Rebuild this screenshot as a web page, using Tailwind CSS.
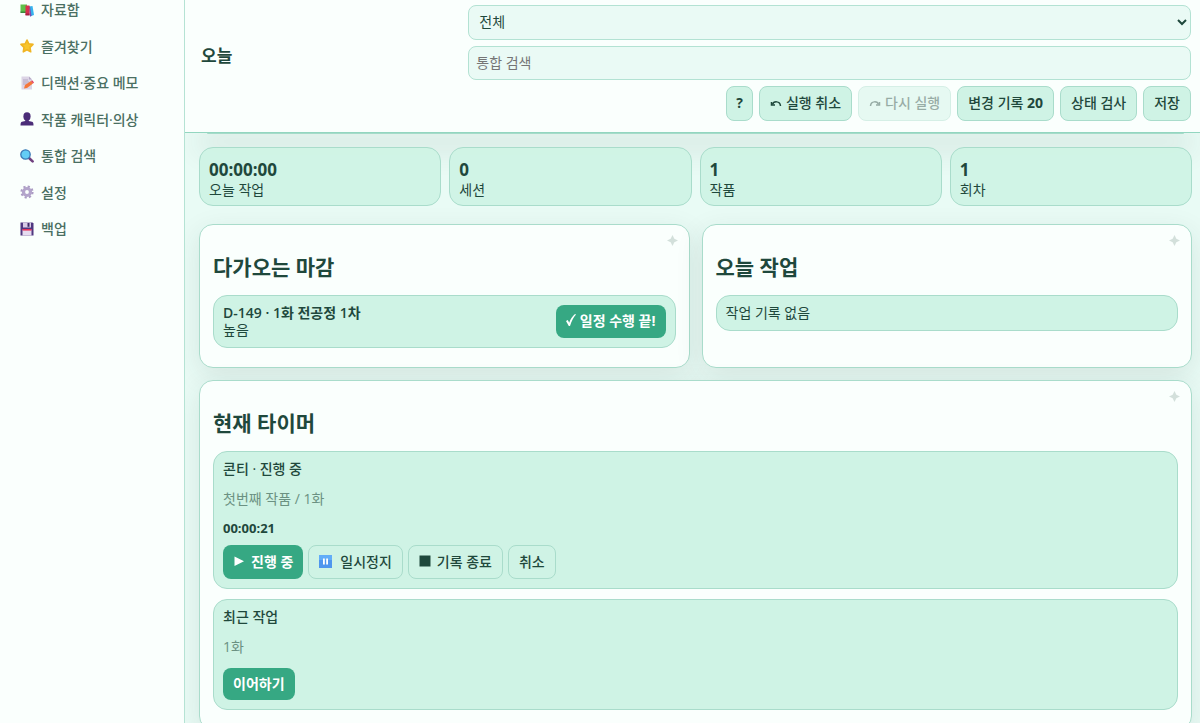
<!DOCTYPE html>
<html lang="ko">
<head>
  <meta charset="UTF-8">
  <meta name="viewport" content="width=device-width, initial-scale=1.0">
  <script src="https://cdn.jsdelivr.net/npm/@tailwindcss/browser@4"></script>
  <title>오늘</title>
</head>
<body class="flex min-h-screen bg-[#e9fbf5] font-['Open_Sans','Noto_Sans_CJK_KR',sans-serif] text-sm text-[#1f483c]">

  <!-- 사이드바 -->
  <aside class="relative z-10 w-[185px] shrink-0 border-r border-[#b5e3d4] bg-[#fafffd]">
    <nav class="-mt-[7px] flex flex-col gap-[3px] pl-5 leading-tight font-medium text-[#4a6f62]">
      <a href="#library" class="flex items-center gap-[7px] py-2">
        <svg class="size-3.5" viewBox="0 0 14 14"><path d="M.5 1.500h6.500v8H.500z" fill="#5fc04a"/><path d="M.5 8.500h6.500v1.500H.500z" fill="#3b8a3c"/><path d="M9 3.500l3.500-.5 1.500 9-4 1.500z" fill="#35b4ee"/><path d="M9 3.500l1-.2 1.500 9.700-1.500.5z" fill="#7a4bb0"/><path d="M5.500 2.500H9.500v9.500H5.500z" fill="#d8304f"/><path d="M5.500 10.500h4V12.500h-4z" fill="#a61e45"/></svg>
        자료함
      </a>
      <a href="#favorites" class="flex items-center gap-[7px] py-2">
        <svg class="size-3.5" viewBox="0 0 14 14"><path d="M7 1l1.800 3.800 4.200.6-3 3 .7 4.400L7 10.800l-3.700 2 .7-4.400-3-3 4.200-.6z" fill="#f7c52d" stroke="#f0b524" stroke-width="1.600" stroke-linejoin="round"/></svg>
        즐겨찾기
      </a>
      <a href="#memo" class="flex items-center gap-[7px] py-2">
        <svg class="size-3.5" viewBox="0 0 14 14"><path d="M1.500.500h7.500l3 3v10H1.500z" fill="#dcd5e6"/><path d="M9 .500v3h3z" fill="#b5a9c6"/><path d="M3 4h5M3 6h6M3 8h4" stroke="#a99dbb" stroke-width=".8"/><path d="M4 12.500l1-3.500 6-4 2 2.500-6 4.500z" fill="#f5773b"/><path d="M11 5l1.200-.8 1.800 2.400-1 .9z" fill="#e23d5c"/></svg>
        디렉션·중요 메모
      </a>
      <a href="#characters" class="flex items-center gap-[7px] py-2">
        <svg class="size-3.5" viewBox="0 0 14 14"><ellipse cx="7" cy="4.500" rx="3.600" ry="4.200" fill="#4b2d78"/><path d="M5.300 7h3.400v2l3.300.8c1 .3 1.500 1.200 1.500 3.600H.5c0-2.400.5-3.300 1.500-3.600l3.300-.8z" fill="#4b2d78"/></svg>
        작품 캐릭터·의상
      </a>
      <a href="#search" class="flex items-center gap-[7px] py-2">
        <svg class="size-3.5" viewBox="0 0 14 14"><path d="M9 9l3.600 3.400" stroke="#70407f" stroke-width="2.600" stroke-linecap="round"/><circle cx="5.500" cy="5.500" r="4.700" fill="#63cdf5" stroke="#3b78b5" stroke-width="1.300"/></svg>
        통합 검색
      </a>
      <a href="#settings" class="flex items-center gap-[7px] py-2">
        <svg class="size-3.5" viewBox="0 0 14 14"><circle cx="7" cy="7" r="5.500" fill="none" stroke="#ab9cc3" stroke-width="2.200" stroke-dasharray="2.160 2.160"/><circle cx="7" cy="7" r="3.500" fill="none" stroke="#b3a4cb" stroke-width="3.200"/></svg>
        설정
      </a>
      <a href="#backup" class="flex items-center gap-[7px] py-2">
        <svg class="size-3.5" viewBox="0 0 14 14"><path d="M.5.500h12l1 1v12H.500z" fill="#4f3780"/><path d="M3 .500h8v5H3z" fill="#d7cbe6"/><path d="M7.500 1h2v3.800h-2z" fill="#3c2868"/><path d="M2.500 7.500h9v6h-9z" fill="#e6dcf0"/><path d="M2.500 7h9v1.600h-9z" fill="#e8345c"/></svg>
        백업
      </a>
    </nav>
  </aside>

  <div class="min-w-0 flex-1">
    <!-- 상단 바 -->
    <header class="relative z-10 grid grid-cols-[27fr_73fr] items-center border-b border-[#93d6c0] bg-[#fafffd] pt-[5px] pr-[9px] pb-[11px] pl-4">
      <h1 class="pb-3.5 text-[17px] font-bold">오늘</h1>
      <div class="flex flex-col gap-1.5">
        <select aria-label="범위" class="h-[35px] w-full rounded-lg border border-[#b3e2d3] bg-[#eafaf5] px-1.5 pb-0.5">
          <option>전체</option>
        </select>
        <input type="search" aria-label="통합 검색" placeholder="통합 검색" class="h-[34px] w-full rounded-lg border border-[#b3e2d3] bg-[#eafaf5] px-[7px] pb-0.5 placeholder:text-[#757575]">
        <div class="flex justify-end gap-1.5 font-medium">
          <button class="h-[35px] rounded-lg border border-[#a9dccb] bg-[#cff3e5] px-[9px] pb-0.5 font-bold">?</button>
          <button class="flex h-[35px] items-center gap-1 rounded-lg border border-[#a9dccb] bg-[#cff3e5] px-2.5 pb-0.5">
            <svg class="h-3 w-3" viewBox="0 0 12 12" fill="none" stroke="currentColor" stroke-width="1.500"><path d="M2.500 7.500C3.500 4 10 3.500 10.500 9"/><path d="M1.500 5v3h3.500"/></svg>
            실행 취소
          </button>
          <button disabled class="flex h-[35px] items-center gap-1 rounded-lg border border-[#a9dccb] bg-[#cff3e5] px-2.5 pb-0.5 opacity-45">
            <svg class="h-3 w-3" viewBox="0 0 12 12" fill="none" stroke="currentColor" stroke-width="1.500"><path d="M9.500 7.500C8.500 4 2 3.500 1.500 9"/><path d="M10.500 5v3H7"/></svg>
            다시 실행
          </button>
          <button class="h-[35px] rounded-lg border border-[#a9dccb] bg-[#cff3e5] px-2.5 pb-0.5">변경 기록 <b>20</b></button>
          <button class="h-[35px] rounded-lg border border-[#a9dccb] bg-[#cff3e5] px-2.5 pb-0.5">상태 검사</button>
          <button class="h-[35px] rounded-lg border border-[#a9dccb] bg-[#cff3e5] px-2.5 pb-0.5">저장</button>
        </div>
      </div>
    </header>

    <main class="pr-2 pl-3.5 leading-[17px]">
      <div class="mx-2 h-px rounded-b-full bg-[#a5dbc9] shadow-[0_8px_28px_8px_rgba(40,60,55,0.12)]"></div>

      <!-- 요약 -->
      <section class="mt-[13px] grid grid-cols-4 gap-2">
        <div class="rounded-[14px] border border-[#a9dccb] bg-[#cff3e5]/95 px-[9px] pt-[11px] pb-[7px]">
          <strong class="block text-[17px] leading-[22px]">00:00:00</strong>
          <span class="block">오늘 작업</span>
        </div>
        <div class="rounded-[14px] border border-[#a9dccb] bg-[#cff3e5]/95 px-[9px] pt-[11px] pb-[7px]">
          <strong class="block text-[17px] leading-[22px]">0</strong>
          <span class="block">세션</span>
        </div>
        <div class="rounded-[14px] border border-[#a9dccb] bg-[#cff3e5]/95 px-[9px] pt-[11px] pb-[7px]">
          <strong class="block text-[17px] leading-[22px]">1</strong>
          <span class="block">작품</span>
        </div>
        <div class="rounded-[14px] border border-[#a9dccb] bg-[#cff3e5]/95 px-[9px] pt-[11px] pb-[7px]">
          <strong class="block text-[17px] leading-[22px]">1</strong>
          <span class="block">회차</span>
        </div>
      </section>

      <div class="mt-[18px] grid grid-cols-2 gap-3">
        <!-- 다가오는 마감 -->
        <section class="relative rounded-[14px] border border-[#a9dccb] bg-[#fafffd] px-[13px] pt-7 pb-[19px] shadow-[0_8px_28px_rgba(40,60,55,0.1)]">
          <svg class="absolute top-2.5 right-[11px] size-[11px]" viewBox="0 0 12 12" fill="#d3e0db"><path d="M6 0l2 4 4 2-4 2-2 4-2-4-4-2 4-2z"/></svg>
          <h2 class="mb-3.5 text-[21px] leading-7 font-bold">다가오는 마감</h2>
          <div class="flex items-center justify-between rounded-[14px] border border-[#a9dccb] bg-[#cff3e5] px-[9px] pt-2 pb-[9px]">
            <div>
              <strong class="block font-semibold">D-149 · 1화 전공정 1차</strong>
              <span class="block">높음</span>
            </div>
            <button class="flex h-[33px] items-center gap-1 rounded-lg bg-[#36a883] px-2.5 pb-0.5 font-bold text-white">
              <svg class="h-3 w-2.5" viewBox="0 0 10 12"><path d="M0 7l1.800-1 1.400 2.800C4.500 5 6.500 2 9 0l1 .6C7.500 3.500 5.500 7 4 12H2.800z" fill="currentColor"/></svg>
              일정 수행 끝!
            </button>
          </div>
        </section>

        <!-- 오늘 작업 -->
        <section class="relative rounded-[14px] border border-[#a9dccb] bg-[#fafffd] px-[13px] pt-7 pb-[19px] shadow-[0_8px_28px_rgba(40,60,55,0.1)]">
          <svg class="absolute top-2.5 right-[11px] size-[11px]" viewBox="0 0 12 12" fill="#d3e0db"><path d="M6 0l2 4 4 2-4 2-2 4-2-4-4-2 4-2z"/></svg>
          <h2 class="mb-3.5 text-[21px] leading-7 font-bold">오늘 작업</h2>
          <p class="rounded-[14px] border border-[#a9dccb] bg-[#cff3e5] px-[9px] pt-2 pb-[9px]">작업 기록 없음</p>
        </section>
      </div>

      <!-- 현재 타이머 -->
      <section class="relative mt-3 rounded-[14px] border border-[#a9dccb] bg-[#fafffd] px-[13px] pt-7 pb-[19px] shadow-[0_8px_28px_rgba(40,60,55,0.1)]">
        <svg class="absolute top-2.5 right-[11px] size-[11px]" viewBox="0 0 12 12" fill="#d3e0db"><path d="M6 0l2 4 4 2-4 2-2 4-2-4-4-2 4-2z"/></svg>
        <h2 class="mb-3.5 text-[21px] leading-7 font-bold">현재 타이머</h2>
        <div class="flex flex-col gap-2.5">
          <div class="rounded-[14px] border border-[#a9dccb] bg-[#cff3e5] px-[9px] pt-2 pb-[9px]">
            <strong class="block font-medium">콘티 · 진행 중</strong>
            <p class="my-[13px] text-[#6b9182]">첫번째 작품 / 1화</p>
            <strong class="block text-[13px]">00:00:21</strong>
            <div class="mt-2 flex gap-[5px] font-medium">
              <button class="flex h-[34px] items-center gap-1.5 rounded-lg bg-[#36a883] px-2.5 pb-0.5 font-bold text-white">
                <svg class="h-3 w-3" viewBox="0 0 12 12" fill="currentColor"><path d="M1.500 1.500v9.500L11 6.200z"/></svg>
                진행 중
              </button>
              <button class="flex h-[34px] items-center gap-2 rounded-lg border border-[#a9dccb] px-2.5 pb-0.5">
                <svg class="size-[13px]" viewBox="0 0 13 13"><path d="M0 0h13v13H0z" fill="#4f96ee"/><path d="M0 0h13v5H0z" fill="#62adf8"/><path d="M4 3.500h1.800v6H4zM7.200 3.500H9v6H7.200z" fill="#fff"/></svg>
                일시정지
              </button>
              <button class="flex h-[34px] items-center gap-1.5 rounded-lg border border-[#a9dccb] px-2.5 pb-0.5">
                <svg class="h-3 w-3" viewBox="0 0 12 12" fill="currentColor"><path d="M.5.500h11v11H.500z"/></svg>
                기록 종료
              </button>
              <button class="h-[34px] rounded-lg border border-[#a9dccb] px-2.5 pb-0.5">취소</button>
            </div>
          </div>
          <div class="rounded-[14px] border border-[#a9dccb] bg-[#cff3e5] px-[9px] pt-2 pb-[9px]">
            <strong class="block font-medium">최근 작업</strong>
            <p class="my-[13px] text-[#6b9182]">1화</p>
            <button class="block h-8 rounded-lg bg-[#36a883] px-2.5 pb-0.5 font-bold text-white">이어하기</button>
          </div>
        </div>
      </section>
    </main>
  </div>
</body>
</html>
